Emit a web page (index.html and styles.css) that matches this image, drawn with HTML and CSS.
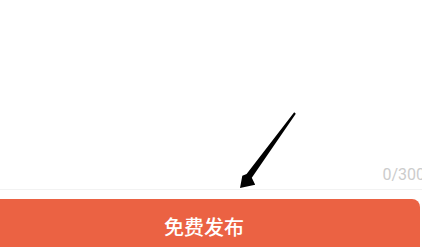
FILE: index.html
```html
<!DOCTYPE html>
<html>
<head>
<meta charset="utf-8">
<link rel="stylesheet" href="styles.css">
</head>
<body>
<div class="page">
  <div class="editor">
    <div class="count">0/300</div>
  </div>
  <div class="divider"></div>
  <div class="publish">免费发布</div>
</div>
<svg class="arrow" width="422" height="247" viewBox="0 0 422 247">
  <polygon points="240,188 242.3,175.8 246.6,173.9 294.2,112.3 295.8,113.7 251.8,177.8 255.2,184.8" fill="#000"/>
</svg>
</body>
</html>
```

FILE: styles.css
```css
html, body {
  margin: 0;
  padding: 0;
  background: #fff;
  overflow: hidden;
  width: 422px;
  height: 247px;
}
.page {
  position: relative;
  display: flex;
  flex-direction: column;
  width: 422px;
}
.editor {
  height: 189px;
  display: flex;
  flex-direction: column;
  justify-content: flex-end;
  align-items: flex-end;
}
.count {
  font-family: Roboto, "Liberation Sans", sans-serif;
  font-size: 16px;
  line-height: 20px;
  color: #cccccc;
  margin-right: -3px;
  padding-bottom: 4px;
  white-space: nowrap;
}
.divider {
  height: 1px;
  background: #f2f2f2;
}
.publish {
  margin-top: 9px;
  margin-left: -12px;
  margin-right: 2px;
  height: 60px;
  border-radius: 8px;
  background: #eb6243;
  color: #fff;
  font-family: "Noto Sans CJK SC", sans-serif;
  font-size: 20px;
  font-weight: 500;
  line-height: 26px;
  padding-top: 15px;
  box-sizing: border-box;
  text-align: center;
}
.arrow {
  position: absolute;
  left: 0;
  top: 0;
}
```
